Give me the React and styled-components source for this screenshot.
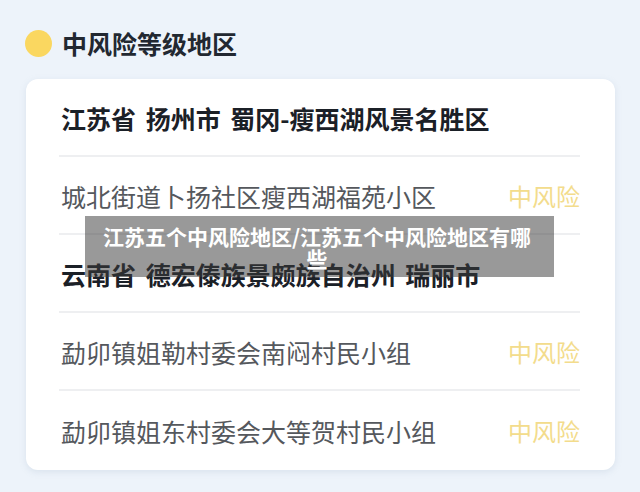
import styled, { createGlobalStyle } from "styled-components";

const GlobalStyle = createGlobalStyle`
  html, body {
    margin: 0;
    padding: 0;
    background: #edf3fa;
  }
  body {
    font-family: "Noto Sans CJK SC", "Noto Sans", sans-serif;
  }
`;

const Page = styled.div`
  position: relative;
  width: 640px;
  height: 492px;
  padding: 29px 25px 0 25px;
  box-sizing: border-box;
  overflow: hidden;
`;

const Header = styled.div`
  display: flex;
  align-items: center;
  gap: 10px;
  height: 28px;
`;

const Dot = styled.span`
  width: 27px;
  height: 27px;
  border-radius: 50%;
  background: #fad760;
  flex-shrink: 0;
`;

const Title = styled.h2`
  margin: 0;
  font-size: 25px;
  line-height: 28px;
  font-weight: 700;
  color: #222831;
`;

const Card = styled.div`
  margin: 22px 0 0 1px;
  width: 589px;
  height: 391px;
  box-sizing: border-box;
  padding: 0 35px 0 33px;
  background: #ffffff;
  border-radius: 12px;
  box-shadow: 0 2px 6px rgba(160, 180, 205, 0.25);
`;

const Row = styled.div`
  display: flex;
  align-items: center;
  justify-content: space-between;
  height: 78px;
  box-sizing: border-box;
  padding: 2px 0 0 2px;
  border-bottom: ${(p) => (p.$last ? "none" : "2px solid #eeeff1")};
`;

const Place = styled.span`
  font-size: 25px;
  line-height: 30px;
  font-weight: ${(p) => (p.$heading ? 700 : 400)};
  color: ${(p) => (p.$heading ? "#1b2027" : "#55585d")};
  word-spacing: ${(p) => (p.$heading ? "4px" : "0")};
  white-space: nowrap;
`;

const Risk = styled.span`
  font-size: 24px;
  line-height: 30px;
  color: #f3dc8c;
  white-space: nowrap;
`;

const Caption = styled.div`
  position: absolute;
  left: 85px;
  top: 216px;
  width: 469px;
  height: 61px;
  box-sizing: border-box;
  padding: 9px 17px 0 12px;
  background: rgba(60, 60, 60, 0.52);
  color: #ffffff;
  font-size: 21px;
  line-height: 22px;
  font-weight: 700;
  text-align: center;
`;

const rows = [
  { name: "江苏省 扬州市 蜀冈-瘦西湖风景名胜区", heading: true },
  { name: "城北街道卜扬社区瘦西湖福苑小区", risk: "中风险" },
  { name: "云南省 德宏傣族景颇族自治州 瑞丽市", heading: true },
  { name: "勐卯镇姐勒村委会南闷村民小组", risk: "中风险" },
  { name: "勐卯镇姐东村委会大等贺村民小组", risk: "中风险" },
];

export default function App() {
  return (
    <>
      <GlobalStyle />
      <Page>
        <Header>
          <Dot />
          <Title>中风险等级地区</Title>
        </Header>
        <Card>
          {rows.map((row, i) => (
            <Row key={i} $last={i === rows.length - 1}>
              <Place $heading={row.heading}>{row.name}</Place>
              {row.risk && <Risk>{row.risk}</Risk>}
            </Row>
          ))}
        </Card>
        <Caption>江苏五个中风险地区/江苏五个中风险地区有哪些</Caption>
      </Page>
    </>
  );
}
